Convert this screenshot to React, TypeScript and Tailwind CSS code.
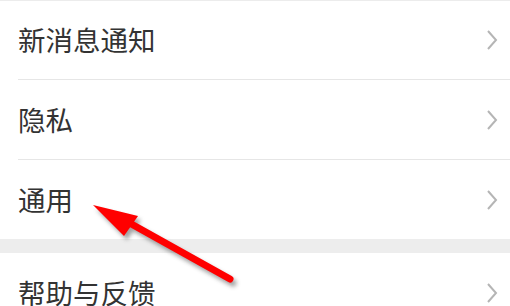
const rows = ["新消息通知", "隐私", "通用"];

function Chevron() {
  return (
    <svg width="12" height="20" viewBox="0 0 12 20" className="shrink-0">
      <polyline points="2,1 10,10 2,19" fill="none" stroke="#b5b5b5" strokeWidth="2" />
    </svg>
  );
}

function Row({ label, h }: { label: string; h: string }) {
  return (
    <div className={`flex items-center justify-between pl-[18px] pr-[12px] ${h}`}>
      <span className="text-[27.5px] leading-none text-[#333333]">{label}</span>
      <Chevron />
    </div>
  );
}

export default function App() {
  return (
    <div
      className="relative w-[510px] h-[306px] overflow-hidden bg-white"
      style={{ fontFamily: '"Noto Sans CJK SC", "Noto Sans", sans-serif' }}
    >
      <div className="h-px bg-[#ececec]" />
      <Row label={rows[0]} h="h-[78px]" />
      <div className="ml-[18px] h-px bg-[#e6e6e6]" />
      <Row label={rows[1]} h="h-[79px]" />
      <div className="ml-[18px] h-px bg-[#e6e6e6]" />
      <Row label={rows[2]} h="h-[79px]" />
      <div className="h-[14px] bg-[#ededed]" />
      <Row label="帮助与反馈" h="h-[80px]" />

      {/* 红色箭头 */}
      <svg className="absolute left-0 top-0" width="510" height="306" viewBox="0 0 510 306">
        <defs>
          <filter id="blur" x="-20%" y="-20%" width="140%" height="140%">
            <feGaussianBlur stdDeviation="2" />
          </filter>
        </defs>
        <g transform="translate(3,4)" filter="url(#blur)" opacity="0.55">
          <line x1="126" y1="221" x2="230" y2="279" stroke="#555" strokeWidth="7" strokeLinecap="round" />
          <polygon points="93,205 138,216 124,236" fill="#555" />
        </g>
        <line x1="126" y1="221" x2="230" y2="279" stroke="#ff0000" strokeWidth="7" strokeLinecap="round" />
        <polygon points="93,205 138,216 124,236" fill="#ff0000" />
      </svg>
    </div>
  );
}
